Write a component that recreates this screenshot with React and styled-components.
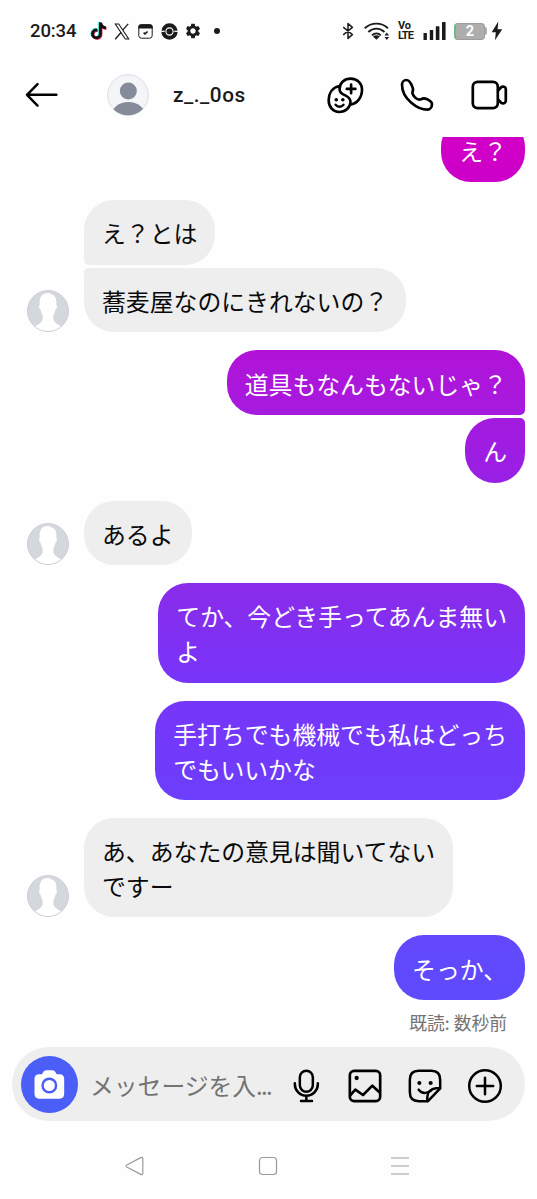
import styled, { createGlobalStyle } from "styled-components";
import { FaTiktok } from "react-icons/fa6";
import { MdSettings } from "react-icons/md";

const messages = [
  { mine: true, items: [{ text: ["え？"], bg: ["#d400c6", "#cc00c9"] }] },
  {
    mine: false,
    items: [{ text: ["え？とは"] }, { text: ["蕎麦屋なのにきれないの？"] }],
  },
  {
    mine: true,
    items: [
      { text: ["道具もなんもないじゃ？"], bg: ["#b212d8", "#a51bde"] },
      { text: ["ん"], bg: ["#a41ade", "#9820e6"] },
    ],
  },
  { mine: false, items: [{ text: ["あるよ"] }] },
  {
    mine: true,
    items: [
      {
        text: ["てか、今どき手ってあんま無い", "よ"],
        bg: ["#8a2be9", "#7735fa"],
      },
    ],
  },
  {
    mine: true,
    items: [
      {
        text: ["手打ちでも機械でも私はどっち", "でもいいかな"],
        bg: ["#7636fa", "#6d3efc"],
      },
    ],
  },
  {
    mine: false,
    items: [{ text: ["あ、あなたの意見は聞いてない", "ですー"] }],
  },
  { mine: true, items: [{ text: ["そっか、"], bg: ["#6248fc", "#5f4afd"] }] },
];

function TiktokIcon() {
  return (
    <svg width="18" height="20" viewBox="0 0 18 20">
      <FaTiktok x="0.3" y="0.8" size="17" color="#25e5df" />
      <FaTiktok x="1.6" y="1.9" size="17" color="#f5325b" />
      <FaTiktok x="1" y="1.3" size="17" color="#111" />
    </svg>
  );
}

function XIcon() {
  return (
    <svg width="16" height="17" viewBox="0 0 16 17">
      <g fill="none" stroke="#1b1b1b" strokeWidth="1.1">
        <path d="M1.3 1h3.4l10 15h-3.4z" />
        <path d="M14.200.8 8.700 7.200M7.200 9.300 1.200 16.200" strokeWidth="1.300" />
      </g>
    </svg>
  );
}

function CalendarIcon() {
  return (
    <svg width="15" height="15" viewBox="0 0 15 15">
      <rect x="0.8" y="0.8" width="13.4" height="13.4" rx="2.6" fill="none" stroke="#1b1b1b" strokeWidth="1" />
      <path d="M.3 4.6V3A2.7 2.7 0 0 1 3 .3h9A2.7 2.7 0 0 1 14.7 3v1.6z" fill="#1b1b1b" />
      <path d="M5.6 8.6 7 9.9 9.600 7.500" fill="none" stroke="#1b1b1b" strokeWidth="1.7" />
    </svg>
  );
}

function BallIcon() {
  return (
    <svg width="17" height="17" viewBox="0 0 17 17">
      <circle cx="8.5" cy="8.5" r="8.200" fill="#1b1b1b" />
      <path d="M0 8.3h17" stroke="#fff" strokeWidth="1.2" />
      <circle cx="8.5" cy="8.5" r="4.8" fill="#1b1b1b" />
      <circle cx="8.5" cy="8.5" r="3.6" fill="none" stroke="#fff" strokeWidth="1.1" />
    </svg>
  );
}

function BluetoothIcon() {
  return (
    <svg width="12" height="18" viewBox="0 0 12 18">
      <path
        d="M1.2 5.2 10.4 12.6 6 16.4V1.6l4.4 3.8L1.2 12.8"
        fill="none"
        stroke="#1b1b1b"
        strokeWidth="1.5"
        strokeLinejoin="round"
      />
    </svg>
  );
}

function WifiIcon() {
  return (
    <svg width="26" height="18" viewBox="0 0 26 18">
      <g fill="none" stroke="#1b1b1b" strokeWidth="1.9">
        <path d="M.8 6.3C7.4.1 17.4.1 24 6.3" />
        <path d="M4.4 10c4.600-4.500 11.400-4.500 16 0" />
        <path d="M8 13.4c2.600-2.500 6.200-2.500 8.800 0" />
      </g>
      <path d="M12.4 17.8 9 14.5c2-1.6 4.8-1.6 6.8 0z" fill="#1b1b1b" />
      <path d="m20.5 13.6 2.3-3 2.3 3zM20.500 15h4.6l-2.3 3z" fill="#1b1b1b" />
    </svg>
  );
}

function SignalIcon() {
  return (
    <svg width="24" height="18" viewBox="0 0 24 18" fill="#1b1b1b">
      <rect x="0.5" y="11" width="3.4" height="7" rx="0.6" />
      <rect x="6.8" y="8" width="3.4" height="10" rx="0.6" />
      <rect x="12.8" y="4.2" width="3.6" height="13.8" rx="0.6" />
      <rect x="19" y="0" width="3.6" height="18" rx="0.6" />
    </svg>
  );
}

function BoltIcon() {
  return (
    <svg width="12" height="20" viewBox="0 0 12 20">
      <path d="M7.300.6.700 11.200h4.100L4 19.200l7.200-11H6.600z" fill="#1b1b1b" />
    </svg>
  );
}

function BackIcon() {
  return (
    <svg width="33" height="26" viewBox="0 0 100 78">
      <path
        d="M95 38.500H6M38 6 6 38.500 38 71"
        fill="none"
        stroke="#000"
        strokeWidth="7.500"
        strokeLinecap="round"
        strokeLinejoin="round"
      />
    </svg>
  );
}

function ProfileIcon() {
  return (
    <svg width="42" height="42" viewBox="0 0 126 126">
      <clipPath id="profile">
        <circle cx="63" cy="63" r="61" />
      </clipPath>
      <circle cx="63" cy="63" r="61" fill="#f3f5f8" stroke="#dcdee1" strokeWidth="3" />
      <g clipPath="url(#profile)" fill="#858b98">
        <circle cx="64" cy="51" r="25.5" />
        <ellipse cx="64" cy="126" rx="51" ry="42" />
      </g>
    </svg>
  );
}

function PersonIcon() {
  return (
    <svg width="42" height="42" viewBox="0 0 126 126">
      <clipPath id="person">
        <circle cx="63" cy="63" r="61" />
      </clipPath>
      <circle cx="63" cy="63" r="61" fill="#d4d7dc" />
      <path
        clipPath="url(#person)"
        d="M64 9C47 9 38 19 38 36v8c-3 3-2 13 3 16 1 7 3 11 6 15v10c0 14-14 19-35 31v18h104v-18C93 104 79 99 79 85V75c3-4 5-8 6-15 5-3 6-13 3-16v-8c0-14-7-22-16-23-2-3-5-4-8-4z"
        fill="#fff"
      />
      <circle cx="63" cy="63" r="61.5" fill="none" stroke="#c4c7cf" strokeWidth="2.5" />
    </svg>
  );
}

function FaceCallIcon() {
  return (
    <svg width="37" height="37" viewBox="0 0 112 112">
      <g fill="none" stroke="#000" strokeWidth="8" strokeLinecap="round">
        <path d="M38 27C15 32 5 50 5 70c0 21 14 36 32 36 19 0 34-14 34-30 0-14-11-18-19-22-9-4-14-10-14-18C38 17 53 5 72 5c20 0 34 15 34 33 0 24-14 42-36 46" />
        <path d="M73 23v26M60 36h26" />
        <path d="M26 84c6 8 18 8 24 0" strokeWidth="7" />
      </g>
      <circle cx="28" cy="69" r="5.500" />
      <circle cx="48" cy="69" r="5.500" />
    </svg>
  );
}

function PhoneIcon() {
  return (
    <svg width="34" height="34" viewBox="0 0 102 102">
      <path
        d="M6 20C6 12 12 6 19 6c7 0 13 8 17 18 4 8 4 12 2 16-3 7 1 12 7 18 6 6 11 9 18 6 6-4 10-4 17-1 9 4 16 8 16 15 0 9-6 17-14 17C55 95 6 64 6 20z"
        fill="none"
        stroke="#000"
        strokeWidth="8"
        strokeLinejoin="round"
      />
    </svg>
  );
}

function VideoIcon() {
  return (
    <svg width="38" height="36" viewBox="0 0 38 36">
      <g fill="none" stroke="#000" strokeWidth="2.7" strokeLinejoin="round">
        <rect x="2.8" y="4.9" width="25" height="26.2" rx="4.8" />
        <path d="M28 13.5l3.2-3.2c1.5-1.4 4.6-.8 4.6 1.6v12.2c0 2.4-3.1 3-4.6 1.6L28 22.5" />
      </g>
    </svg>
  );
}

function CameraIcon() {
  return (
    <svg width="31" height="29" viewBox="0 0 93 88">
      <path
        d="M15 13h9c3-7 7-12 14-12h16c7 0 11 5 14 12h9c9 0 14 5 14 14v46c0 9-5 14-14 14H15C6 87 1 82 1 73V27c0-9 5-14 14-14z"
        fill="#fff"
      />
      <circle cx="46" cy="47" r="20.5" fill="none" stroke="#4b5ff8" strokeWidth="7.500" />
    </svg>
  );
}

function MicIcon() {
  return (
    <svg width="27" height="35" viewBox="0 0 81 105">
      <g fill="none" stroke="#000" strokeWidth="7.5" strokeLinecap="round">
        <rect x="20.5" y="8" width="39" height="63" rx="19.5" />
        <path d="M5.5 46v3a34.5 34.5 0 0 0 69 0v-3M40 84v14M24 99h33" />
      </g>
    </svg>
  );
}

function ImageIcon() {
  return (
    <svg width="34" height="34" viewBox="0 0 102 102">
      <g fill="none" stroke="#000" strokeWidth="8" strokeLinejoin="round">
        <rect x="5.5" y="5.5" width="91" height="91" rx="13" />
        <path d="M6 80 22 62l23 16 28-28 23 21" />
      </g>
      <circle cx="26" cy="27" r="6.5" />
    </svg>
  );
}

function StickerIcon() {
  return (
    <svg width="34" height="34" viewBox="0 0 102 102">
      <g fill="none" stroke="#000" strokeWidth="7.5" strokeLinecap="round" strokeLinejoin="round">
        <path d="M58 96.5H32C15 96.5 5.5 87 5.5 70V32C5.5 15 15 5.5 32 5.5h38C87 5.5 96.500 15 96.500 32v26L60 96.5z" />
        <path d="M96 58H84C68 60 58 70 58 84v12" />
        <path d="M32 62c10 13 25 13 38 2" />
      </g>
      <circle cx="34" cy="42" r="6.2" />
      <circle cx="68" cy="42" r="6.2" />
    </svg>
  );
}

function PlusIcon() {
  return (
    <svg width="36" height="36" viewBox="0 0 36 36">
      <g fill="none" stroke="#000" strokeWidth="2.5" strokeLinecap="round">
        <circle cx="18" cy="18" r="15.8" />
        <path d="M18 9.8v16.400M9.800 18h16.400" />
      </g>
    </svg>
  );
}

function Bubble({ item, mine, joinTop, joinBottom }) {
  return (
    <BubbleBox $mine={mine} $bg={item.bg} $joinTop={joinTop} $joinBottom={joinBottom}>
      {item.text.map((line) => (
        <p key={line}>{line}</p>
      ))}
    </BubbleBox>
  );
}

export default function App() {
  return (
    <Screen>
      <GlobalStyle />
      <StatusBar>
        <Time>20:34</Time>
        <Slot>
          <TiktokIcon />
        </Slot>
        <Slot>
          <XIcon />
        </Slot>
        <Slot>
          <CalendarIcon />
        </Slot>
        <Slot>
          <BallIcon />
        </Slot>
        <Slot>
          <MdSettings size={18} />
        </Slot>
        <Slot>
          <Dot />
        </Slot>
        <StatusRight>
          <BluetoothIcon />
          <StatusItem $gap={10}>
            <WifiIcon />
          </StatusItem>
          <StatusItem $gap={7}>
            <Volte>
              <span>Vo</span>
              <span>LTE</span>
            </Volte>
          </StatusItem>
          <StatusItem $gap={8}>
            <SignalIcon />
          </StatusItem>
          <StatusItem $gap={7}>
            <Battery>2</Battery>
            <BatteryTip />
          </StatusItem>
          <StatusItem $gap={4}>
            <BoltIcon />
          </StatusItem>
        </StatusRight>
      </StatusBar>

      <Header>
        <BackIcon />
        <Profile>
          <ProfileIcon />
          <strong>z_._0os</strong>
        </Profile>
        <HeaderBtns>
          <FaceCallIcon />
          <PhoneIcon />
          <VideoIcon />
        </HeaderBtns>
      </Header>

      <Chat>
        {messages.map(({ mine, items }, i) => (
          <Row key={i} $mine={mine}>
            {!mine && <PersonIcon />}
            <Group $mine={mine}>
              {items.map((item, j) => (
                <Bubble
                  key={j}
                  item={item}
                  mine={mine}
                  joinTop={j > 0}
                  joinBottom={j < items.length - 1}
                />
              ))}
            </Group>
          </Row>
        ))}
        <Seen>既読: 数秒前</Seen>
      </Chat>

      <Composer>
        <CameraBtn>
          <CameraIcon />
        </CameraBtn>
        <Placeholder>
          メッセージを入<span>...</span>
        </Placeholder>
        <ComposerBtns>
          <MicIcon />
          <ImageIcon />
          <StickerIcon />
          <PlusIcon />
        </ComposerBtns>
      </Composer>

      <NavBar>
        <svg width="20" height="20" viewBox="0 0 20 20">
          <path d="M1.7 9 15.8 1.6c1-.5 2 .1 2 1.2v14.4c0 1.1-1 1.7-2 1.2L1.7 11c-.9-.5-.9-1.5 0-2z" />
        </svg>
        <svg width="20" height="20" viewBox="0 0 20 20">
          <rect x="1.5" y="1.5" width="17" height="17" rx="3" />
        </svg>
        <svg width="20" height="20" viewBox="0 0 20 20">
          <path d="M1 2h18M1 10h18M1 18h18" />
        </svg>
      </NavBar>
    </Screen>
  );
}

const GlobalStyle = createGlobalStyle`
  * {
    box-sizing: border-box;
  }

  body {
    margin: 0;
    background-color: #fff;
    font-family: "Noto Sans CJK JP", "Noto Sans", sans-serif;
  }

  svg {
    display: block;
    flex-shrink: 0;
  }
`;

const Screen = styled.div`
  width: 537px;
  height: 1199px;
  display: flex;
  flex-direction: column;
  background-color: #fefefe;
  overflow: hidden;
`;

const StatusBar = styled.div`
  height: 62px;
  padding: 0 34px 0 30px;
  display: flex;
  align-items: center;
  color: #1b1b1b;
`;

const Time = styled.span`
  width: 56px;
  font-family: Roboto, sans-serif;
  font-size: 18.5px;
  font-weight: 500;
  letter-spacing: -0.1px;
`;

const Slot = styled.div`
  width: 23.8px;
  display: flex;
  justify-content: center;
`;

const Dot = styled.span`
  width: 6px;
  height: 6px;
  border-radius: 50%;
  background-color: #1b1b1b;
`;

const StatusRight = styled.div`
  margin-left: auto;
  display: flex;
  align-items: center;
`;

const StatusItem = styled.div`
  margin-left: ${({ $gap }) => $gap}px;
  display: flex;
  align-items: center;
`;

const Volte = styled.div`
  width: 18px;
  padding-left: 1px;
  display: flex;
  flex-direction: column;
  font-family: Roboto, sans-serif;
  font-size: 11px;
  font-weight: 700;
  line-height: 10px;
  letter-spacing: -0.9px;

  span:first-child {
    letter-spacing: -0.2px;
  }
`;

const Battery = styled.div`
  width: 31px;
  height: 17px;
  border: 1px solid #9d9d9d;
  border-left: 2px solid #6ebb82;
  border-radius: 4px;
  background-color: #adadad;
  color: #fff;
  font-family: Roboto, sans-serif;
  font-size: 14.5px;
  font-weight: 700;
  line-height: 16px;
  text-align: center;
`;

const BatteryTip = styled.div`
  width: 2px;
  height: 8px;
  border-radius: 0 2px 2px 0;
  background-color: #adadad;
`;

const Header = styled.header`
  height: 74.5px;
  padding: 0 29px 8.5px 25px;
  display: flex;
  align-items: center;
`;

const Profile = styled.div`
  margin-left: 49px;
  display: flex;
  align-items: center;
  gap: 24px;

  strong {
    color: #1b1b1b;
    font-family: Roboto, sans-serif;
    font-size: 20.8px;
    font-weight: 500;
    letter-spacing: 0.5px;
  }
`;

const HeaderBtns = styled.div`
  margin-left: auto;
  display: flex;
  align-items: center;
  gap: 36px;
`;

const Chat = styled.main`
  height: 910.5px;
  padding: 0 12px 12px 27px;
  display: flex;
  flex-direction: column;
  justify-content: flex-end;
  gap: 18px;
  overflow: hidden;
`;

const Row = styled.div`
  flex-shrink: 0;
  display: flex;
  align-items: flex-end;
  justify-content: ${({ $mine }) => ($mine ? "flex-end" : "flex-start")};
  gap: 15px;
`;

const Group = styled.div`
  display: flex;
  flex-direction: column;
  align-items: ${({ $mine }) => ($mine ? "flex-end" : "flex-start")};
  gap: 3.2px;
`;

const BubbleBox = styled.div`
  padding: 16.2px 18px 13.6px;
  border-radius: 30px;
  background: ${({ $mine, $bg }) =>
    $mine ? `linear-gradient(${$bg[0]}, ${$bg[1]})` : "#eeeeee"};
  color: ${({ $mine }) => ($mine ? "#fff" : "#0a0a0a")};
  font-size: 23.85px;
  line-height: 34.8px;
  white-space: nowrap;
  ${({ $mine, $joinTop }) =>
    $joinTop && `border-top-${$mine ? "right" : "left"}-radius: 5px;`}
  ${({ $mine, $joinBottom }) =>
    $joinBottom && `border-bottom-${$mine ? "right" : "left"}-radius: 5px;`}

  p {
    margin: 0;
  }
`;

const Seen = styled.div`
  flex-shrink: 0;
  margin-top: -9px;
  padding-right: 18px;
  color: #737373;
  font-size: 17.8px;
  line-height: 26px;
  text-align: right;
`;

const Composer = styled.div`
  flex-shrink: 0;
  height: 74px;
  margin: 0 12px;
  padding: 0 22px 0 9px;
  display: flex;
  align-items: center;
  border-radius: 37px;
  background-color: #eeeeee;
`;

const CameraBtn = styled.div`
  width: 57px;
  height: 57px;
  display: flex;
  justify-content: center;
  align-items: center;
  border-radius: 50%;
  background-color: #4b5ff8;
`;

const Placeholder = styled.span`
  margin-left: 12px;
  color: #737373;
  font-size: 23.8px;
  line-height: 35px;
  white-space: nowrap;

  span {
    letter-spacing: -1.7px;
  }
`;

const ComposerBtns = styled.div`
  margin-left: auto;
  padding-top: 3px;
  display: flex;
  align-items: center;
  gap: 25.5px;

  svg:first-child {
    margin-right: 3px;
  }
`;

const NavBar = styled.nav`
  height: 78px;
  padding: 12px 127px 0 125px;
  display: flex;
  align-items: center;
  justify-content: space-between;

  svg {
    fill: none;
    stroke: #999;
    stroke-width: 1.2;
  }
`;
